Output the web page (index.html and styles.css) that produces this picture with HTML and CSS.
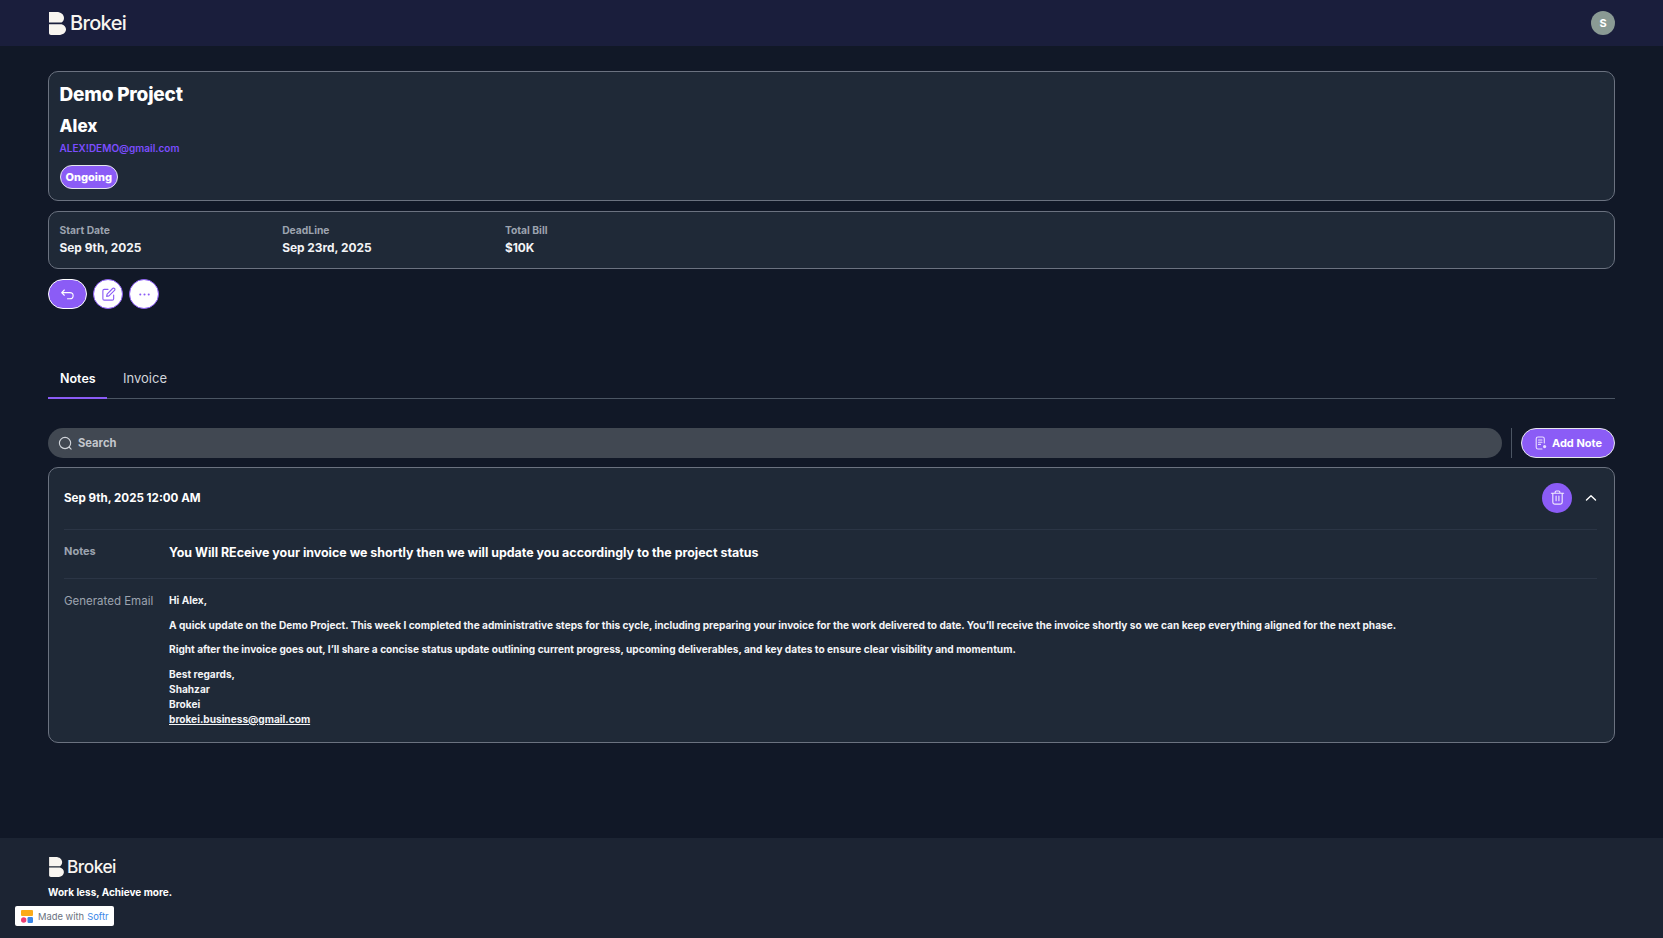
FILE: index.html
```html
<!DOCTYPE html>
<html lang="en">
<head>
<meta charset="utf-8">
<title>Brokei</title>
<link rel="stylesheet" href="styles.css">
</head>
<body>
<header class="topbar">
  <a class="logo">
    <svg class="logo-mark" viewBox="0 0 17 23"><path d="M0 0H7.5C12 0 15 2.6 15 6C15 8 14 9.7 12.5 10.6H0Z M0 12.2H12.5C15.3 13 17 15 17 17.2C17 20.6 14 23 9.5 23H2C.9 23 0 22.1 0 21Z" fill="#f8f5f0"/></svg>
    <span class="logo-text">Brokei</span>
  </a>
  <div class="avatar">S</div>
</header>

<main class="content">
  <section class="card head-card">
    <h1 class="title">Demo Project</h1>
    <h2 class="client">Alex</h2>
    <div class="email">ALEX!DEMO@gmail.com</div>
    <span class="badge">Ongoing</span>
  </section>

  <section class="card meta-card">
    <div class="meta"><div class="meta-label">Start Date</div><div class="meta-value">Sep 9th, 2025</div></div>
    <div class="meta"><div class="meta-label">DeadLine</div><div class="meta-value">Sep 23rd, 2025</div></div>
    <div class="meta"><div class="meta-label">Total Bill</div><div class="meta-value">$10K</div></div>
  </section>

  <div class="actions">
    <button class="btn-back"><svg viewBox="0 0 16 16" fill="none" stroke="#fff" stroke-width="1.2" stroke-linecap="round" stroke-linejoin="round"><path d="M4.6 3.2L1.8 6L4.6 8.8M1.8 6H10.5C12.7 6 14 7.3 14 9.2C14 11.1 12.7 12.5 10.5 12.5H8"/></svg></button>
    <button class="btn-round"><svg viewBox="0 0 16 16" fill="none" stroke="#8b5cf6" stroke-width="1.2" stroke-linecap="round" stroke-linejoin="round"><path d="M7.5 2.5H3.5C2.6 2.5 2 3.1 2 4V12.5C2 13.4 2.6 14 3.5 14H12C12.9 14 13.5 13.4 13.5 12.5V8.5"/><path d="M12.4 1.6C13 1 13.9 1 14.4 1.6C15 2.1 15 3 14.4 3.6L8.5 9.5L6 10L6.5 7.5Z"/></svg></button>
    <button class="btn-round"><svg viewBox="0 0 16 16" fill="#8b5cf6"><circle cx="3.5" cy="8" r="1.1"/><circle cx="8" cy="8" r="1.1"/><circle cx="12.5" cy="8" r="1.1"/></svg></button>
  </div>

  <nav class="tabs">
    <a class="tab tab-active">Notes</a>
    <a class="tab">Invoice</a>
  </nav>

  <div class="toolbar">
    <div class="search">
      <svg viewBox="0 0 16 16" fill="none" stroke="#d1d5db" stroke-width="1.2" stroke-linecap="round"><circle cx="7.5" cy="7.5" r="6"/><path d="M12 12L14 14"/></svg>
      <span>Search</span>
    </div>
    <div class="divider"></div>
    <button class="btn-add"><svg viewBox="0 0 14 14" fill="none" stroke="#e9dffd" stroke-width="1.1" stroke-linecap="round"><path d="M8 13H4C3 13 2.2 12.2 2.2 11.2V2.8C2.2 1.8 3 1 4 1H8.5C9.5 1 10.3 1.8 10.3 2.8V7"/><path d="M4.5 4H8M4.5 6.2H8M4.5 8.4H6.5"/><circle cx="10.6" cy="10.6" r="1.6" fill="#e9dffd" stroke="none"/></svg>Add Note</button>
  </div>

  <section class="card note-card">
    <div class="note-head">
      <div class="note-date">Sep 9th, 2025 12:00 AM</div>
      <div class="note-tools">
        <button class="btn-trash"><svg viewBox="0 0 16 16" fill="none" stroke="#f1eafe" stroke-width="1.2" stroke-linecap="round" stroke-linejoin="round"><path d="M1.5 3.5H14.5M5.5 3.5V2.2C5.5 1.5 6 1 6.7 1H9.3C10 1 10.5 1.5 10.5 2.2V3.5M3 3.5V13C3 14.1 3.9 15 5 15H11C12.1 15 13 14.1 13 13V3.5M6.5 6.5V11.5M9.5 6.5V11.5"/></svg></button>
        <svg class="chevron" viewBox="0 0 12 8" fill="none" stroke="#fff" stroke-width="1.4" stroke-linecap="round" stroke-linejoin="round"><path d="M1.5 6L6 1.8L10.5 6"/></svg>
      </div>
    </div>
    <div class="row row-notes">
      <div class="row-label label-bold">Notes</div>
      <div class="row-note">You Will REceive your invoice we shortly then we will update you accordingly to the project status</div>
    </div>
    <div class="row row-email">
      <div class="row-label">Generated Email</div>
      <div class="email-body">
        <p>Hi Alex,</p>
        <p>A quick update on the Demo Project. This week I completed the administrative steps for this cycle, including preparing your invoice for the work delivered to date. You’ll receive the invoice shortly so we can keep everything aligned for the next phase.</p>
        <p>Right after the invoice goes out, I’ll share a concise status update outlining current progress, upcoming deliverables, and key dates to ensure clear visibility and momentum.</p>
        <p>Best regards,<br>Shahzar<br>Brokei<br><a class="mail-link">brokei.business@gmail.com</a></p>
      </div>
    </div>
  </section>
</main>

<footer class="footer">
  <a class="logo logo-small">
    <svg class="logo-mark" viewBox="0 0 17 23"><path d="M0 0H7.5C12 0 15 2.6 15 6C15 8 14 9.7 12.5 10.6H0Z M0 12.2H12.5C15.3 13 17 15 17 17.2C17 20.6 14 23 9.5 23H2C.9 23 0 22.1 0 21Z" fill="#f8f5f0"/></svg>
    <span class="logo-text">Brokei</span>
  </a>
  <div class="tagline">Work less, Achieve more.</div>
  <div class="softr">
    <svg viewBox="0 0 12 13"><rect x="0" y="0" width="12" height="6" rx="1" fill="#fbab1a"/><circle cx="2.7" cy="10" r="2.7" fill="#ef3e72"/><rect x="6.5" y="7" width="5.5" height="6" rx="1.2" fill="#3a86e8"/></svg>
    <span>Made with</span><span class="softr-name">Softr</span>
  </div>
</footer>
</body>
</html>
```

FILE: styles.css
```css
* { box-sizing: border-box; }
html, body { margin: 0; padding: 0; }
body {
  min-height: 938px;
  background: #111827;
  color: #fff;
  font-family: Inter, "Open Sans", sans-serif;
  display: flex;
  flex-direction: column;
}
button { font-family: inherit; padding: 0; cursor: pointer; }
p { margin: 0; }
h1, h2 { margin: 0; }

.topbar {
  height: 46px;
  background: #1a1e3c;
  padding: 0 48px;
  display: flex;
  align-items: center;
  justify-content: space-between;
}
.logo { display: flex; align-items: center; gap: 4px; }
.logo-mark { width: 17px; height: 23px; display: block; margin-left: 1px; }
.logo-text { font-size: 20px; font-weight: 500; letter-spacing: -0.65px; color: #f8f5f0; line-height: 23px; }
.avatar {
  width: 24px; height: 24px; border-radius: 50%;
  background: #8a9a94; color: #fff;
  font-size: 11px; font-weight: 700;
  display: flex; align-items: center; justify-content: center;
}

.content { padding: 25px 48px 0; flex: 1; }
.card {
  background: #1f2937;
  border: 1px solid #6b7280;
  border-radius: 10px;
}
.head-card { padding: 11px 10.5px 0; height: 130px; }
.title { font-size: 19px; line-height: 24px; font-weight: 800; letter-spacing: -0.2px; }
.client { font-size: 17px; line-height: 24px; font-weight: 800; margin-top: 7px; }
.email { font-size: 10px; line-height: 16px; font-weight: 600; color: #7c4dff; margin-top: 2px; }
.badge {
  display: inline-block;
  margin-top: 9px;
  background: #8b5cf6;
  border: 1px solid #e5e7eb;
  border-radius: 12px;
  height: 24px;
  padding: 0 5px;
  font-size: 11px;
  line-height: 22px;
  font-weight: 800;
}

.meta-card { margin-top: 10px; height: 58px; padding: 11px 10.5px 0; display: flex; }
.meta { width: 222.7px; }
.meta-label { font-size: 10.3px; line-height: 14px; font-weight: 700; color: #9ca3af; }
.meta-value { font-size: 11.9px; line-height: 18px; font-weight: 700; color: #f3f4f6; margin-top: 2px; }

.actions { margin-top: 10px; display: flex; gap: 6px; }
.btn-back {
  width: 39px; height: 30px; border-radius: 15px;
  background: #8b5cf6; border: 1px solid #fff;
  display: flex; align-items: center; justify-content: center;
}
.btn-back svg { width: 15px; height: 15px; }
.btn-round {
  width: 30px; height: 30px; border-radius: 15px;
  background: #fff; border: 1px solid #8b5cf6;
  display: flex; align-items: center; justify-content: center;
}
.btn-round svg { width: 15px; height: 15px; }

.tabs {
  margin-top: 52px;
  height: 38px;
  border-bottom: 1px solid #4b5563;
  display: flex;
}
.tab { padding: 7px 12px 0; font-size: 13px; line-height: 20px; font-weight: 400; color: #d1d5db; }
.tab-active { padding-top: 8px; font-size: 12.5px; font-weight: 600; color: #fff; border-bottom: 2px solid #8b5cf6; height: 38px; width: 59px; padding-right: 0; margin-right: 4px; }

.toolbar { margin-top: 29px; display: flex; align-items: center; }
.search {
  flex: 1; height: 30px; border-radius: 15px;
  background: #414852;
  display: flex; align-items: center; gap: 5px;
  padding-left: 10px;
  font-size: 11.2px; font-weight: 700; color: #c3c7cd;
}
.search svg { width: 15px; height: 15px; }
.divider { width: 1px; height: 30px; background: #4b5563; margin: 0 9px; }
.btn-add {
  width: 94px; height: 30px; border-radius: 15px;
  background: #8b5cf6; border: 1px solid #e5e7eb; color: #fff;
  font-size: 11px; font-weight: 700;
  display: flex; align-items: center; justify-content: center; gap: 4px;
}
.btn-add svg { width: 14px; height: 14px; }

.note-card { margin-top: 9px; height: 276px; padding: 0 17px 0 15px; }
.note-head { height: 62px; padding-bottom: 2px; border-bottom: 1px solid #2b3545; display: flex; align-items: center; justify-content: space-between; }
.note-date { font-size: 11.6px; font-weight: 700; }
.note-tools { display: flex; align-items: center; gap: 13px; }
.btn-trash {
  width: 30px; height: 30px; border-radius: 50%; border: 0;
  background: #8b5cf6;
  display: flex; align-items: center; justify-content: center;
}
.btn-trash svg { width: 15px; height: 15px; }
.chevron { width: 12px; height: 8px; }

.row { display: flex; }
.row-label { width: 105px; flex: none; font-size: 11.5px; color: #9ca3af; line-height: 16px; }
.label-bold { font-size: 11px; font-weight: 700; }
.row-notes { height: 49px; padding-top: 13px; border-bottom: 1px solid #2b3545; }
.row-note { font-size: 12.43px; line-height: 20px; font-weight: 700; }
.row-email { padding-top: 14px; }
.email-body { font-size: 10.15px; line-height: 15px; font-weight: 700; color: #f3f4f6; }
.email-body p + p { margin-top: 9.5px; }
.mail-link { text-decoration: underline; }

.footer {
  height: 100px;
  background: #1c2433;
  padding: 19px 48px 0;
  position: relative;
}
.logo-small { gap: 3px; }
.logo-small .logo-mark { width: 15px; height: 20px; }
.logo-small .logo-text { font-size: 17.3px; line-height: 20px; letter-spacing: -0.5px; }
.tagline { font-size: 10px; line-height: 15px; font-weight: 700; margin-top: 8px; }
.softr {
  position: absolute;
  left: 15px; top: 68px;
  width: 99px; height: 20px;
  background: #fff;
  border-radius: 2px;
  display: flex; align-items: center; gap: 3px;
  padding-left: 6px;
  font-family: Inter, sans-serif;
  font-size: 9.4px; color: #6b7280;
}
.softr svg { width: 12px; height: 13px; margin-right: 2px; }
.softr-name { color: #3a86e8; }
```
